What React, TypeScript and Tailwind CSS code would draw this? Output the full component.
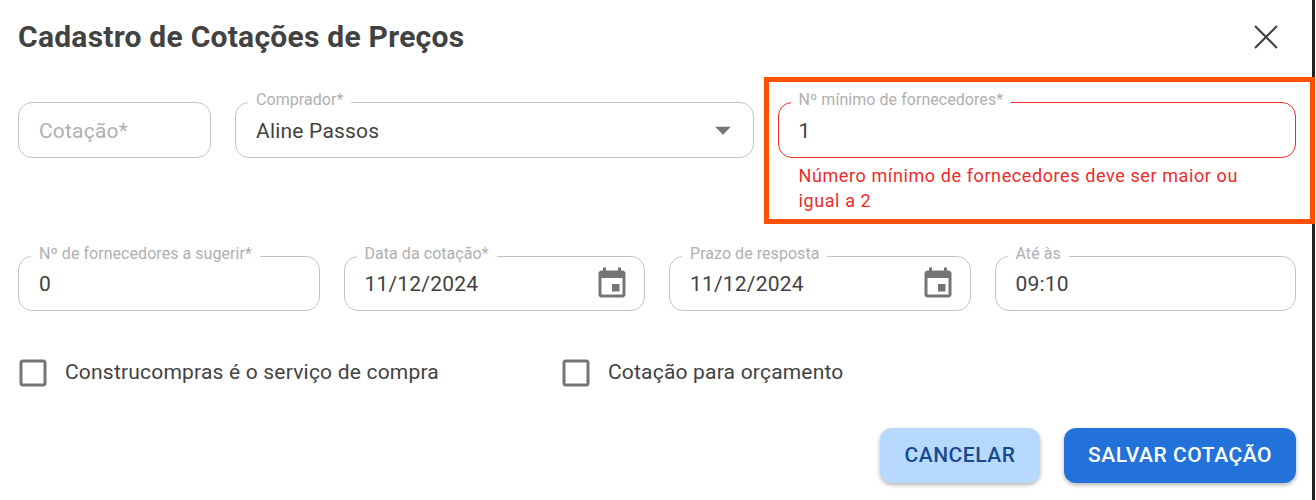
import React from 'react';

const Field = ({ label, value, placeholder, error, icon, short }: {
    label?: string;
    value?: string;
    placeholder?: string;
    error?: boolean;
    icon?: React.ReactNode;
    short?: boolean;
}) => (
    <div className={`relative flex ${short ? 'h-[55px]' : 'h-[56px]'} items-center rounded-[14px] border ${error ? 'border-[#ee2a2a]' : 'border-[#c4c4c4]'}`}>
        {label && (
            <span className="absolute left-[12px] top-[-13px] bg-white px-[8px] text-[16px] leading-[20px] tracking-[0.05px] text-[#b0b0b0] whitespace-nowrap">
                {label}
            </span>
        )}
        <input
            readOnly
            value={value ?? ''}
            placeholder={placeholder}
            className={`h-full min-w-0 flex-1 bg-transparent pl-[20px] ${short ? 'pt-0' : 'pt-[2px]'} text-[21px] tracking-[0.2px] text-[#424242] outline-none placeholder:text-[#b0b0b0]`}
        />
        {icon}
    </div>
);

const CalendarIcon = () => (
    <svg viewBox="0 0 24 24" className="mr-[14px] h-[36px] w-[36px] fill-[#757575]">
        <path d="M17 12h-5v5h5v-5zM16 1v2H8V1H6v2H5c-1.11 0-1.99.9-1.99 2L3 19c0 1.1.89 2 2 2h14c1.1 0 2-.9 2-2V5c0-1.1-.9-2-2-2h-1V1h-2zm3 18H5V8h14v11z" />
    </svg>
);

const CheckLabel = ({ text }: { text: string }) => (
    <label className="flex items-center gap-[14px] text-[21px] tracking-[0.2px] text-[#424242]">
        <svg viewBox="0 0 24 24" className="h-[36px] w-[36px] fill-[#757575]">
            <path d="M19 5v14H5V5h14m0-2H5c-1.1 0-2 .9-2 2v14c0 1.1.9 2 2 2h14c1.1 0 2-.9 2-2V5c0-1.1-.9-2-2-2z" />
        </svg>
        {text}
    </label>
);

const App: React.FC = () => {
    return (
        <div className="relative h-[500px] w-[1316px] overflow-hidden bg-white pl-[18px] pr-[20px] font-['Roboto',sans-serif]">
            {/* borda da janela atrás do destaque */}
            <div className="absolute bottom-0 right-[1px] top-0 w-[3px] bg-[#222222]" />

            <div className="flex h-[74px] items-center justify-between">
                <h2 className="text-[30px] font-bold leading-none tracking-[0.25px] text-[#424242]">Cadastro de Cotações de Preços</h2>
                <svg viewBox="0 0 24 24" className="mr-[10px] h-[40px] w-[40px] fill-none stroke-[#424242] stroke-[1.3]">
                    <path d="M5.4 5.4 18.6 18.6M18.6 5.4 5.4 18.6" />
                </svg>
            </div>

            <div className="mt-[28px] grid grid-cols-[193px_1fr_1fr] gap-x-[24px]">
                <Field placeholder="Cotação*" />
                <Field
                    label="Comprador*"
                    value="Aline Passos"
                    icon={
                        <svg viewBox="0 0 24 24" className="mr-[11px] h-[38px] w-[38px] fill-[#757575]">
                            <path d="M7 10l5 5 5-5z" />
                        </svg>
                    }
                />
                <div>
                    <Field label="Nº mínimo de fornecedores*" value="1" error />
                    <p className="mt-[5px] pl-[21px] pr-[36px] text-[18px] leading-[25px] tracking-[0.6px] text-[#ee2a2a]">
                        Número mínimo de fornecedores deve ser maior ou igual a 2
                    </p>
                </div>
            </div>

            <div className="mt-[43px] grid grid-cols-4 gap-x-[24px]">
                <Field short label="Nº de fornecedores a sugerir*" value="0" />
                <Field short label="Data da cotação*" value="11/12/2024" icon={<CalendarIcon />} />
                <Field short label="Prazo de resposta" value="11/12/2024" icon={<CalendarIcon />} />
                <Field short label="Até às" value="09:10" />
            </div>

            <div className="-ml-[3px] mt-[44px] flex gap-[119px]">
                <CheckLabel text="Construcompras é o serviço de compra" />
                <CheckLabel text="Cotação para orçamento" />
            </div>

            <div className="mt-[37px] flex justify-end gap-[24px]">
                <button className="h-[55px] w-[160px] rounded-[12px] bg-[#b6d9fd] text-[21px] font-medium tracking-[0.55px] text-[#17498f] shadow-[0_2px_4px_rgba(0,0,0,0.3)]">
                    CANCELAR
                </button>
                <button className="h-[55px] w-[232px] rounded-[12px] bg-[#2272d9] text-[21px] font-medium tracking-[0.55px] text-white shadow-[0_2px_4px_rgba(0,0,0,0.3)]">
                    SALVAR COTAÇÃO
                </button>
            </div>

            {/* destaque vermelho sobre o campo com erro */}
            <div className="absolute left-[764px] top-[77px] h-[147px] w-[551px] border-[5px] border-[#ff5000]" />
        </div>
    );
};

export default App;
